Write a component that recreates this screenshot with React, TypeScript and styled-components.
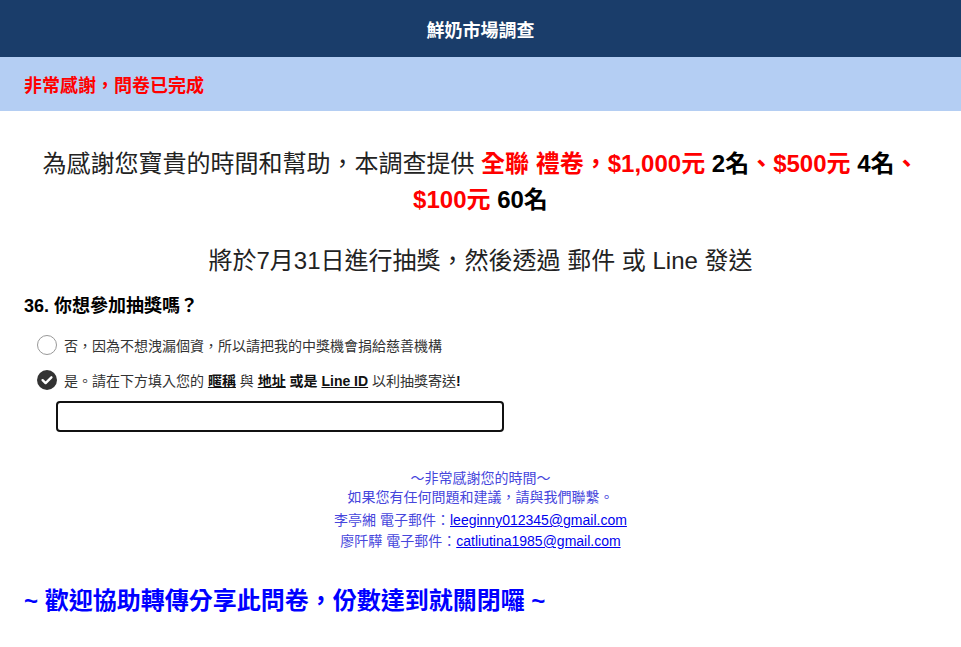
import styled, { createGlobalStyle } from "styled-components";

const GlobalStyle = createGlobalStyle`
  body {
    margin: 0;
    background: #ffffff;
    font-family: "Liberation Sans", Arial, "Noto Sans CJK TC", sans-serif;
  }
`;

const App = () => {
  return (
    <>
      <GlobalStyle />
      <Header>鮮奶市場調查</Header>
      <Banner>非常感謝，問卷已完成</Banner>
      <Intro>
        為感謝您寶貴的時間和幫助，本調查提供 <Red>全聯 禮卷</Red>
        <Red>，$1,000元</Red> <Strong>2名</Strong>
        <Red>、$500元</Red> <Strong>4名</Strong>
        <Red>、</Red>
        <br />
        <Red>$100元</Red> <Strong>60名</Strong>
      </Intro>
      <Notice>將於7月31日進行抽獎，然後透過 郵件 或 Line 發送</Notice>
      <Question>36. 你想參加抽獎嗎？</Question>
      <Options>
        <Option>
          <Radio />
          <Label>否，因為不想洩漏個資，所以請把我的中獎機會捐給慈善機構</Label>
        </Option>
        <Option>
          <Radio $checked>
            <svg width="20" height="20" viewBox="0 0 20 20">
              <path
                d="M5.6 10.2 L8.6 13.1 L14.4 7.3"
                fill="none"
                stroke="#ffffff"
                strokeWidth="2.4"
                strokeLinecap="round"
                strokeLinejoin="round"
              />
            </svg>
          </Radio>
          <Label>
            是。請在下方填入您的 <Mark>暱稱</Mark> 與 <Mark>地址</Mark>{" "}
            <b>或是</b> <Mark>Line ID</Mark> 以利抽獎寄送<b>!</b>
          </Label>
        </Option>
        <Input autoFocus />
      </Options>
      <Footer>
        <div>～非常感謝您的時間～</div>
        <div>如果您有任何問題和建議，請與我們聯繫。</div>
        <Contact $first>
          李亭緗 電子郵件：<Mail href="#">leeginny012345@gmail.com</Mail>
        </Contact>
        <Contact>
          廖阡驊 電子郵件：<Mail href="#">catliutina1985@gmail.com</Mail>
        </Contact>
      </Footer>
      <Share>~ 歡迎協助轉傳分享此問卷，份數達到就關閉囉 ~</Share>
    </>
  );
};

const Header = styled.div`
  height: 57px;
  background-color: #1a3d6a;
  color: #ffffff;
  font-size: 18px;
  font-weight: bold;
  display: flex;
  align-items: center;
  justify-content: center;
`;

const Banner = styled.div`
  height: 54px;
  background-color: #b4cef3;
  color: #ff0000;
  font-size: 18px;
  font-weight: bold;
  display: flex;
  align-items: center;
  padding-left: 24px;
`;

const Intro = styled.p`
  margin: 35px 24px 0;
  text-align: center;
  font-size: 24px;
  line-height: 36px;
  color: #222;
`;

const Red = styled.b`
  color: #ff0000;
`;

const Strong = styled.b`
  color: #000;
`;

const Notice = styled.p`
  margin: 25px 24px 0;
  text-align: center;
  font-size: 24px;
  line-height: 36px;
  color: #222;
`;

const Question = styled.h3`
  margin: 14px 24px 0;
  font-size: 18px;
  line-height: 27px;
  color: #000;
`;

const Options = styled.div`
  display: flex;
  flex-direction: column;
  padding: 7px 0 0 37px;
`;

const Option = styled.div`
  display: flex;
  align-items: center;
  height: 35px;
`;

const Label = styled.span`
  font-size: 14px;
  color: #333;

  b {
    color: #111;
  }
`;

const Radio = styled.span<{ $checked?: boolean }>`
  width: 20px;
  height: 20px;
  box-sizing: border-box;
  border-radius: 50%;
  margin-right: 7px;
  display: flex;
  align-items: center;
  justify-content: center;
  background-color: ${(p) => (p.$checked ? "#333333" : "#ffffff")};
  border: ${(p) => (p.$checked ? "none" : "1.5px solid #999999")};
`;

const Mark = styled.b`
  text-decoration: underline;
  color: #111;
`;

const Input = styled.input`
  margin: 4px 0 0 19px;
  width: 448px;
  height: 31px;
  box-sizing: border-box;
  border: 2px solid #111;
  border-radius: 4px;
  padding: 0 6px;
  font-size: 14px;
  outline: none;
  caret-color: #000;
`;

const Footer = styled.div`
  margin-top: 37px;
  text-align: center;
  font-size: 14px;
  line-height: 19px;
  color: #4646dc;
`;

const Contact = styled.div<{ $first?: boolean }>`
  line-height: 21px;
  margin-top: ${(p) => (p.$first ? "3px" : "0")};
`;

const Mail = styled.a`
  color: #0000ee;
  text-decoration: underline;
`;

const Share = styled.h2`
  margin: 31px 24px 0;
  font-size: 24px;
  line-height: 36px;
  color: #0000ff;
`;

export default App;
